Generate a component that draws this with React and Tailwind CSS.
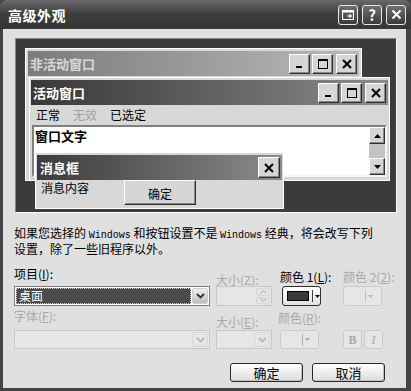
import React from 'react';

const CapBtn = ({ children, className = '' }) => (
    <div className={`flex items-center justify-center bg-[#d6d6d6] border border-t-white border-l-white border-r-[#303030] border-b-[#303030] shadow-[inset_-1px_-1px_0_#888888] ${className}`}>
        {children}
    </div>
);

const MinIcon = () => (
    <svg width="12" height="12" viewBox="0 0 12 12">
        <rect x="2" y="8" width="6" height="2" fill="#000" />
    </svg>
);

const MaxIcon = () => (
    <svg width="12" height="12" viewBox="0 0 12 12">
        <rect x="1.5" y="1.5" width="9" height="9" fill="none" stroke="#000" strokeWidth="1" />
        <rect x="1" y="1" width="10" height="2" fill="#000" />
    </svg>
);

const CloseIcon = () => (
    <svg width="12" height="12" viewBox="0 0 12 12">
        <path d="M2 2 L10 10 M10 2 L2 10" stroke="#000" strokeWidth="2" />
    </svg>
);

const Chevron = ({ color = '#404040' }) => (
    <svg width="9" height="6" viewBox="0 0 9 6">
        <path d="M1 1 L4.5 4.5 L8 1" fill="none" stroke={color} strokeWidth="1.8" />
    </svg>
);

const SmallArrow = ({ color = '#000' }) => (
    <svg width="5" height="3" viewBox="0 0 5 3">
        <path d="M0 0 H5 L2.5 3 Z" fill={color} />
    </svg>
);

const App = () => {
    return (
        <div className="w-[411px] h-[391px] flex flex-col bg-[#444444] font-['Noto_Sans_CJK_SC','Noto_Sans',sans-serif] text-black overflow-hidden">
            {/* Title bar */}
            <div className="h-[29px] flex items-center pl-[8px] pr-[5px] rounded-t-[7px] bg-gradient-to-b from-[#6a6a6a] via-[#3c3c3c] to-[#353535]">
                <span className="text-white font-bold text-[14px] leading-none tracking-[0.5px]">高级外观</span>
                <div className="ml-auto flex gap-[4px]">
                    <div className="w-[20px] h-[20px] rounded-[3px] border border-[#e8e8e8] bg-gradient-to-b from-[#707070] to-[#3a3a3a] flex items-center justify-center">
                        <svg width="12" height="10" viewBox="0 0 12 10">
                            <rect x="0.5" y="0.5" width="11" height="9" fill="none" stroke="#fff" strokeWidth="1.2" />
                            <rect x="0.5" y="0.5" width="11" height="2" fill="#fff" />
                            <path d="M5 6 H9 M7.5 4.5 L9.3 6 L7.5 7.5" stroke="#fff" strokeWidth="1.2" fill="none" />
                        </svg>
                    </div>
                    <div className="w-[20px] h-[20px] rounded-[3px] border border-[#e8e8e8] bg-gradient-to-b from-[#707070] to-[#3a3a3a] flex items-center justify-center text-white font-bold text-[15px] leading-none">?</div>
                    <div className="w-[20px] h-[20px] rounded-[3px] border border-[#e8e8e8] bg-gradient-to-b from-[#707070] to-[#3a3a3a] flex items-center justify-center">
                        <svg width="11" height="11" viewBox="0 0 11 11">
                            <path d="M1.5 1.5 L9.5 9.5 M9.5 1.5 L1.5 9.5" stroke="#fff" strokeWidth="2" />
                        </svg>
                    </div>
                </div>
            </div>

            {/* Body */}
            <div className="flex-1 ml-[3px] mb-[3px] mr-[5px] bg-[#e0e0e0] flex flex-col px-[11px]">
                {/* Preview */}
                <div className="relative mt-[9px] ml-[1px] w-[382px] h-[175px] bg-[#3b3b3b] border border-t-[#8a8a8a] border-l-[#8a8a8a] border-r-white border-b-white">
                    {/* Inactive window */}
                    <div className="absolute left-[9px] top-[9px] w-[337px] h-[133px] bg-[#d8d8d8] border border-white p-[2px]">
                        <div className="h-[25px] flex items-center pl-[2px] pr-[2px] bg-gradient-to-r from-[#7c7c7c] to-[#bababa]">
                            <span className="text-[#d8d8d8] font-bold text-[13px] leading-none">非活动窗口</span>
                            <div className="ml-auto flex gap-[2px]">
                                <CapBtn className="w-[21px] h-[20px]"><MinIcon /></CapBtn>
                                <CapBtn className="w-[21px] h-[20px]"><MaxIcon /></CapBtn>
                                <CapBtn className="w-[21px] h-[20px] ml-[1px]"><CloseIcon /></CapBtn>
                            </div>
                        </div>
                    </div>

                    {/* Active window */}
                    <div className="absolute left-[13px] top-[38px] w-[361px] h-[104px] bg-[#d8d8d8] border border-white p-[1px]">
                        <div className="h-[25px] flex items-center pl-[2px] pr-[2px] mt-[1px] bg-gradient-to-r from-[#383838] to-[#8c8c8c]">
                            <span className="text-white font-bold text-[13px] leading-none">活动窗口</span>
                            <div className="ml-auto flex gap-[2px]">
                                <CapBtn className="w-[21px] h-[20px]"><MinIcon /></CapBtn>
                                <CapBtn className="w-[21px] h-[20px]"><MaxIcon /></CapBtn>
                                <CapBtn className="w-[21px] h-[20px] ml-[1px]"><CloseIcon /></CapBtn>
                            </div>
                        </div>
                        <div className="h-[20px] flex items-center gap-[13px] pl-[5px] text-[12px] leading-none">
                            <span>正常</span>
                            <span className="text-[#a0a0a0]">无效</span>
                            <span>已选定</span>
                        </div>
                        <div className="mx-[1px] h-[52px] bg-white border-2 border-t-[#808080] border-l-[#808080] border-r-[#f4f4f4] border-b-[#f4f4f4] flex">
                            <div className="flex-1 pl-[1px] pt-[1px] font-bold text-[13px] leading-[16px]">窗口文字</div>
                            <div className="w-[16px] flex flex-col">
                                <CapBtn className="h-[17px]">
                                    <svg width="7" height="4" viewBox="0 0 7 4"><path d="M0 4 H7 L3.5 0 Z" fill="#000" /></svg>
                                </CapBtn>
                                <div className="flex-1 bg-[#c4c4c4]" />
                                <CapBtn className="h-[17px]">
                                    <svg width="7" height="4" viewBox="0 0 7 4"><path d="M0 0 H7 L3.5 4 Z" fill="#000" /></svg>
                                </CapBtn>
                            </div>
                        </div>
                    </div>

                    {/* Message box */}
                    <div className="absolute left-[19px] top-[113px] w-[249px] h-[57px] bg-[#d8d8d8] border border-white p-[1px] flex flex-col">
                        <div className="h-[25px] flex items-center pl-[3px] pr-[2px] mt-[1px] bg-gradient-to-r from-[#3c3c3c] to-[#8c8c8c]">
                            <span className="text-white font-bold text-[13px] leading-none">消息框</span>
                            <CapBtn className="ml-auto w-[22px] h-[21px]"><CloseIcon /></CapBtn>
                        </div>
                        <div className="flex">
                            <span className="ml-[4px] mt-[1px] text-[12px] leading-[14px]">消息内容</span>
                            <CapBtn className="ml-[35px] w-[72px] h-[25px] text-[12px] leading-none pt-[2px]">确定</CapBtn>
                        </div>
                    </div>
                </div>

                {/* Description */}
                <p className="mt-[13px] text-[12px] leading-[13px] whitespace-nowrap">
                    如果您选择的 <span className="font-['Liberation_Mono',monospace] text-[10px]">Windows</span> 和按钮设置不是 <span className="font-['Liberation_Mono',monospace] text-[10px]">Windows</span> 经典，将会改写下列
                    <br />
                    设置，除了一些旧程序以外。
                </p>

                {/* Labels row 1 */}
                <div className="mt-[12px] h-[16px] flex items-end text-[12px] leading-none">
                    <div className="w-[202px] self-start pt-[1px]">项目(<u>I</u>):</div>
                    <div className="w-[64px] text-[#a8a8a8] mb-[-3px]">大小(<u>Z</u>):</div>
                    <div className="w-[63px]">颜色 1(<u>L</u>):</div>
                    <div className="text-[#a8a8a8]">颜色 2(<u>2</u>):</div>
                </div>

                {/* Controls row 1 */}
                <div className="mt-[3px] h-[20px] flex items-stretch">
                    <div className="w-[196px] border border-[#7a7a7a] bg-white p-[1px] flex">
                        <div className="flex-1 bg-[#4a4a4a] border border-dotted border-[#cfcfcf] flex items-center pl-[2px] text-white text-[12px] leading-none">桌面</div>
                        <div className="w-[16px] ml-[1px] rounded-[2px] bg-gradient-to-b from-[#f0f0f0] to-[#bdbdbd] border border-[#cfcfcf] flex items-center justify-center">
                            <Chevron color="#303030" />
                        </div>
                    </div>
                    <div className="ml-[6px] w-[56px] border border-[#c8c8c8] bg-[#e6e6e6] flex justify-end p-[1px]">
                        <div className="w-[14px] flex flex-col gap-[1px]">
                            <div className="flex-1 rounded-[2px] border border-[#d8d8d8] flex items-center justify-center">
                                <svg width="7" height="4" viewBox="0 0 7 4"><path d="M0.5 3.5 L3.5 0.5 L6.5 3.5" fill="none" stroke="#c0c0c0" strokeWidth="1.2" /></svg>
                            </div>
                            <div className="flex-1 rounded-[2px] border border-[#d8d8d8] flex items-center justify-center">
                                <svg width="7" height="4" viewBox="0 0 7 4"><path d="M0.5 0.5 L3.5 3.5 L6.5 0.5" fill="none" stroke="#c0c0c0" strokeWidth="1.2" /></svg>
                            </div>
                        </div>
                    </div>
                    <div className="ml-[10px] w-[39px] rounded-[3px] border border-[#2e2e2e] bg-gradient-to-b from-white to-[#e2e2e2] flex items-center pl-[4px]">
                        <div className="w-[22px] h-[10px] bg-[#3a3a3a] border border-black" />
                        <div className="ml-[3px] w-[1px] h-[12px] bg-[#404040]" />
                        <div className="ml-[2px]"><SmallArrow color="#000" /></div>
                    </div>
                    <div className="ml-[22px] w-[39px] rounded-[3px] border border-[#cacaca] bg-[#e6e6e6] flex items-center justify-end pr-[8px]">
                        <div className="w-[1px] h-[12px] bg-[#c0c0c0]" />
                        <div className="ml-[2px]"><SmallArrow color="#b8b8b8" /></div>
                    </div>
                </div>

                {/* Labels row 2 */}
                <div className="mt-[3px] h-[17px] flex items-start text-[12px] leading-none text-[#a8a8a8]">
                    <div className="w-[202px] pt-[1px]">字体(<u>F</u>):</div>
                    <div className="w-[62px] pt-[7px]">大小(<u>E</u>):</div>
                    <div className="pt-[3px]">颜色(<u>R</u>):</div>
                </div>

                {/* Controls row 2 */}
                <div className="mt-[4px] h-[19px] flex items-stretch">
                    <div className="w-[196px] border border-[#c8c8c8] bg-[#e6e6e6] flex justify-end p-[1px]">
                        <div className="w-[16px] rounded-[2px] border border-[#d8d8d8] flex items-center justify-center">
                            <Chevron color="#b8b8b8" />
                        </div>
                    </div>
                    <div className="ml-[6px] w-[56px] border border-[#c8c8c8] bg-[#e6e6e6] flex justify-end p-[1px]">
                        <div className="w-[16px] rounded-[2px] border border-[#d8d8d8] flex items-center justify-center">
                            <Chevron color="#b8b8b8" />
                        </div>
                    </div>
                    <div className="ml-[8px] w-[39px] rounded-[3px] border border-[#cacaca] bg-[#e6e6e6] flex items-center justify-end pr-[8px]">
                        <div className="w-[1px] h-[12px] bg-[#b0b0b0]" />
                        <div className="ml-[2px]"><SmallArrow color="#a8a8a8" /></div>
                    </div>
                    <div className="ml-[24px] w-[19px] rounded-[3px] border border-[#cacaca] bg-[#e6e6e6] flex items-center justify-center font-['Liberation_Serif',serif] font-bold text-[12px] leading-none text-[#a8a8a8]">B</div>
                    <div className="ml-[2px] w-[19px] rounded-[3px] border border-[#cacaca] bg-[#e6e6e6] flex items-center justify-center font-['Liberation_Serif',serif] italic text-[12px] leading-none text-[#a8a8a8]">I</div>
                </div>

                {/* Buttons */}
                <div className="mt-[14px] h-[19px] flex justify-end gap-[9px] pr-[10px]">
                    <button className="w-[73px] rounded-[3px] border border-[#2a2a2a] bg-gradient-to-b from-white to-[#dcdcdc] shadow-[inset_-1px_-1px_0_#c0c0c0] text-[13px] leading-none">确定</button>
                    <button className="w-[73px] rounded-[3px] border border-[#2a2a2a] bg-gradient-to-b from-white to-[#dcdcdc] shadow-[inset_-1px_-1px_0_#c0c0c0] text-[13px] leading-none">取消</button>
                </div>
            </div>
        </div>
    );
};

export default App;
